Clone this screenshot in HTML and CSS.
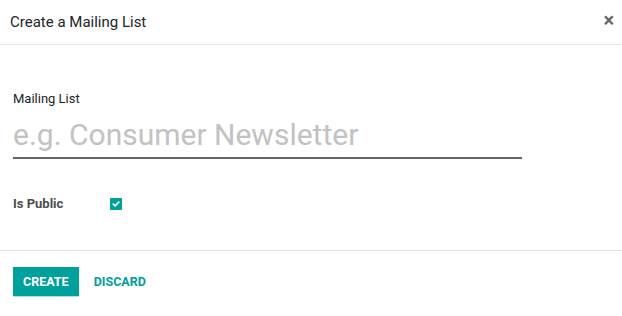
FILE: index.html
```html
<!DOCTYPE html>
<html>
<head>
<meta charset="utf-8">
<link rel="stylesheet" href="styles.css">
</head>
<body>
<div class="modal">
  <header class="modal-header">
    <h4 class="modal-title">Create a Mailing List</h4>
    <button class="close" aria-label="Close">×</button>
  </header>
  <main class="modal-body">
    <label class="field-label">Mailing List</label>
    <div class="name-input">
      <input type="text" placeholder="e.g. Consumer Newsletter">
    </div>
    <div class="row">
      <span class="row-label">Is Public</span>
      <span class="checkbox">
        <svg viewBox="0 0 12 12" width="12" height="12"><rect width="12" height="12" rx="1" fill="#00A09D"/><path d="M3.3 6.2 L5.1 7.9 L8.8 4.2" stroke="#fff" stroke-width="1.6" fill="none" stroke-linecap="square"/></svg>
      </span>
    </div>
  </main>
  <footer class="modal-footer">
    <button class="btn btn-primary">CREATE</button>
    <button class="btn btn-link">DISCARD</button>
  </footer>
</div>
</body>
</html>
```

FILE: styles.css
```css
html, body {
  margin: 0;
  padding: 0;
  background: #fff;
}
body {
  font-family: Roboto, "Noto Sans", sans-serif;
  color: #4c4c4c;
}
.modal {
  width: 622px;
  height: 316px;
  display: flex;
  flex-direction: column;
}
.modal-header {
  height: 45px;
  box-sizing: border-box;
  border-bottom: 1px solid #e5e5e5;
  display: flex;
  align-items: center;
  justify-content: space-between;
  padding: 0 8px 0 10px;
}
.modal-title {
  margin: 0;
  font-size: 15px;
  font-weight: 400;
  color: #212529;
  padding-bottom: 1px;
}
.close {
  border: 0;
  background: none;
  padding: 0;
  font-family: Roboto, sans-serif;
  font-size: 20px;
  font-weight: 700;
  color: #666;
  line-height: 1;
  margin-bottom: 4px;
}
.modal-body {
  padding: 45px 13px 0 13px;
  height: 206px;
  box-sizing: border-box;
  border-bottom: 1px solid #e5e5e5;
}
.field-label {
  display: block;
  font-size: 13px;
  color: #212529;
  line-height: 18px;
}
.name-input {
  width: 509px;
  margin-top: 7px;
}
.name-input input {
  display: block;
  width: 100%;
  box-sizing: border-box;
  border: 0;
  border-bottom: 2px solid #666;
  padding: 0 0 3px 0;
  height: 44px;
  font-family: Roboto, sans-serif;
  font-size: 30px;
  color: #212529;
  outline: none;
  background: transparent;
}
.name-input input::placeholder {
  color: #c2c2c2;
}
.row {
  display: flex;
  align-items: center;
  margin-top: 37px;
}
.row-label {
  width: 97px;
  font-size: 13px;
  font-weight: 700;
  color: #4c4c4c;
}
.checkbox {
  display: flex;
}
.modal-footer {
  display: flex;
  align-items: flex-start;
  padding: 16px 13px 0 13px;
}
.btn {
  font-family: Roboto, sans-serif;
  font-size: 12.5px;
  font-weight: 700;
  border: 0;
  height: 29px;
  padding: 0 10px;
  cursor: pointer;
}
.btn-primary {
  background: #00A09D;
  color: #fff;
  box-shadow: 0 1px 0 #b5dfde;
}
.btn-link {
  background: none;
  color: #00A09D;
  margin-left: 5px;
}
```
